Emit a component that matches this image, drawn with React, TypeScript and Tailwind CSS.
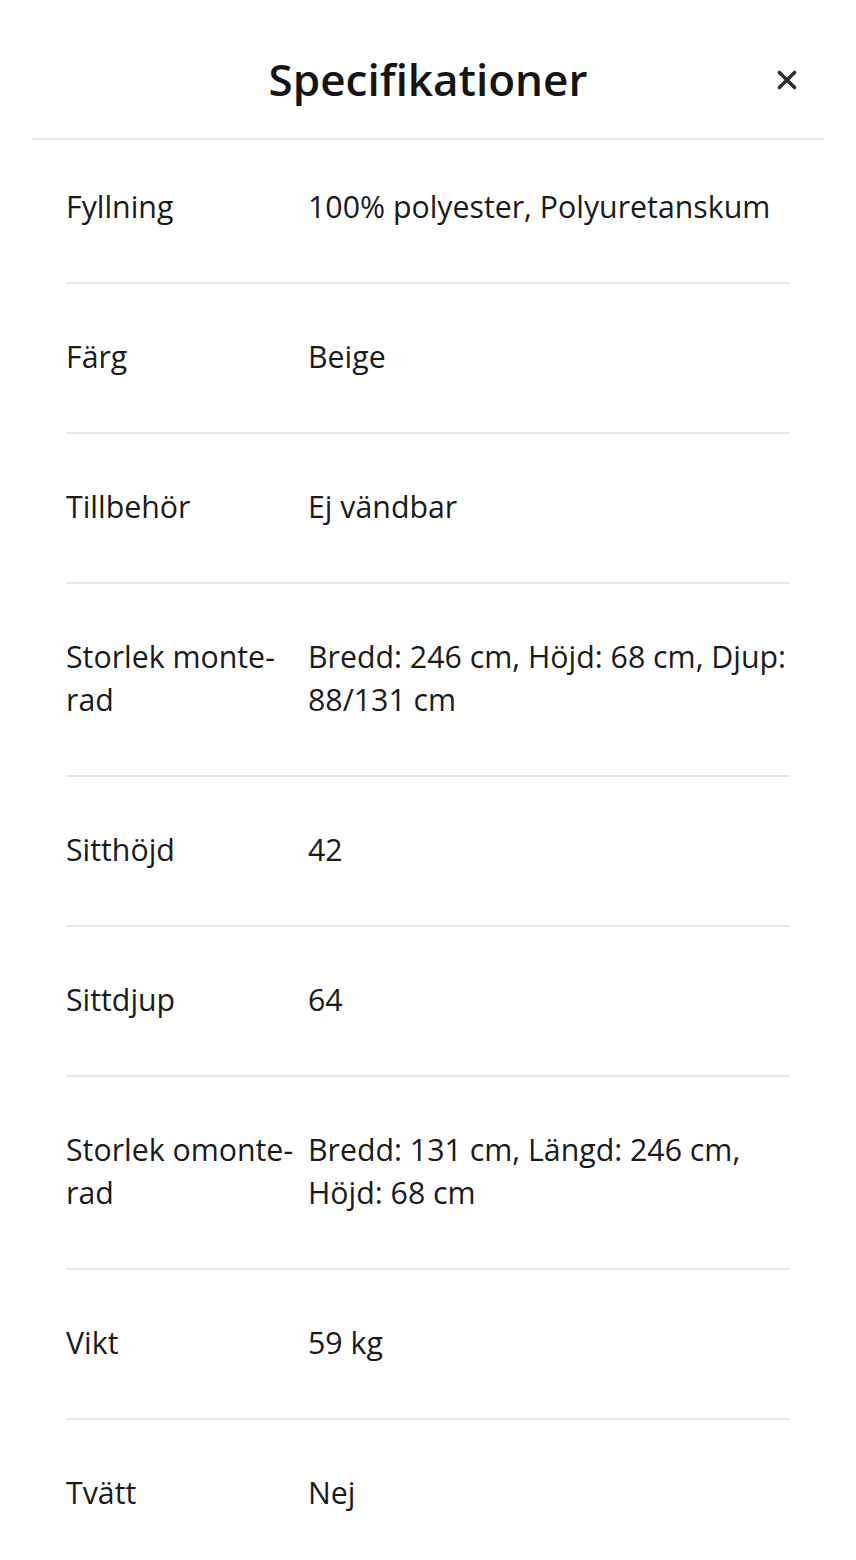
import React from "react";

// Spec rows for the panel
const specs: { label: string; value: string }[] = [
  { label: "Fyllning", value: "100% polyester, Polyuretanskum" },
  { label: "Färg", value: "Beige" },
  { label: "Tillbehör", value: "Ej vändbar" },
  { label: "Storlek monte\u00ADrad", value: "Bredd: 246 cm, Höjd: 68 cm, Djup: 88/131 cm" },
  { label: "Sitthöjd", value: "42" },
  { label: "Sittdjup", value: "64" },
  { label: "Storlek omonte\u00ADrad", value: "Bredd: 131 cm, Längd: 246 cm, Höjd: 68 cm" },
  { label: "Vikt", value: "59 kg" },
  { label: "Tvätt", value: "Nej" },
];

const CloseIcon = () => (
  <svg width="26" height="26" viewBox="0 0 24 24" fill="none">
    <path
      d="M5 5L19 19M19 5L5 19"
      stroke="#2b2b2b"
      strokeWidth="3.2"
      strokeLinecap="round"
    />
  </svg>
);

export default function App() {
  return (
    <div
      className="w-[856px] h-[1560px] overflow-hidden bg-white text-[#1a1a1a]"
      style={{ fontFamily: '"Open Sans", "Noto Sans", sans-serif' }}
    >
      {/* Header */}
      <div className="mx-8 relative flex justify-center pt-[50px] pb-[30px] border-b-2 border-[#e6e6e6]">
        <h1 className="text-[44px] leading-[58px] font-semibold text-[#141414]">
          Specifikationer
        </h1>
        <button className="absolute right-[24px] top-[67px]">
          <CloseIcon />
        </button>
      </div>

      {/* Rows */}
      <div className="px-[66px]">
        {specs.map((spec, i) => (
          <div
            key={spec.label}
            className={`grid grid-cols-[242px_1fr] border-b-2 border-[#e3e5e8] text-[30.3px] leading-[43px] ${
              i === 0 ? "pt-[45px] pb-[54px]" : "pt-[51px] pb-[54px]"
            }`}
          >
            <div className="hyphens-manual pr-2">{spec.label}</div>
            <div>{spec.value}</div>
          </div>
        ))}
      </div>
    </div>
  );
}
